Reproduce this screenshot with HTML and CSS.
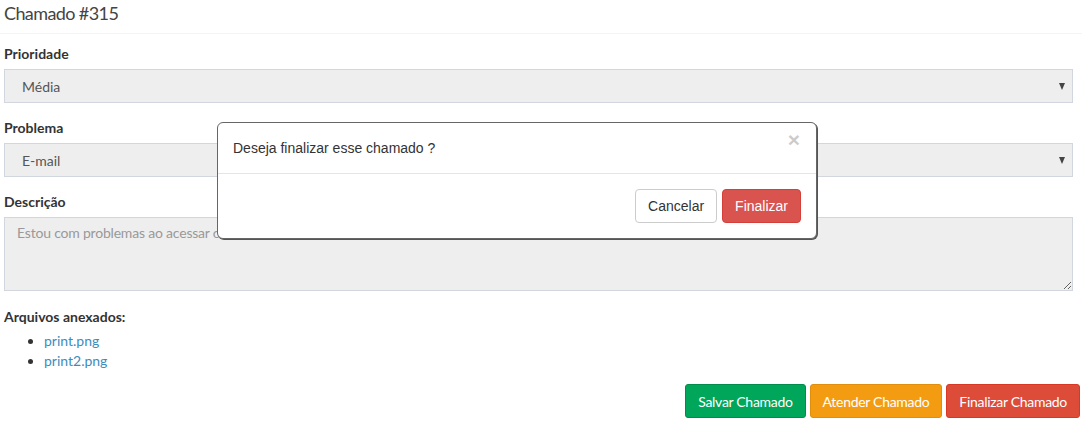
FILE: index.html
```html
<!DOCTYPE html>
<html lang="pt-BR">
<head>
<meta charset="utf-8">
<title>Chamado #315</title>
<link rel="stylesheet" href="styles.css">
</head>
<body>
<div class="page">
  <div class="box-header">Chamado #315</div>
  <div class="box-body">
    <div class="form-group">
      <label class="label">Prioridade</label>
      <div class="select-wrap"><select class="control"><option>Média</option></select></div>
    </div>
    <div class="form-group">
      <label class="label">Problema</label>
      <div class="select-wrap"><select class="control"><option>E-mail</option></select></div>
    </div>
    <div class="form-group">
      <label class="label">Descrição</label>
      <textarea class="control textarea" placeholder="Estou com problemas ao acessar o e-mail"></textarea>
    </div>
    <div class="files">
      <div class="label">Arquivos anexados:</div>
      <ul class="file-list">
        <li><a href="#">print.png</a></li>
        <li><a href="#">print2.png</a></li>
      </ul>
    </div>
  </div>
  <div class="actions">
    <button class="btn btn-success">Salvar Chamado</button>
    <button class="btn btn-warning">Atender Chamado</button>
    <button class="btn btn-danger">Finalizar Chamado</button>
  </div>

  <div class="modal">
    <div class="modal-header">
      <span class="modal-title">Deseja finalizar esse chamado ?</span>
      <span class="close">×</span>
    </div>
    <div class="modal-footer">
      <button class="mbtn mbtn-default">Cancelar</button>
      <button class="mbtn mbtn-danger">Finalizar</button>
    </div>
  </div>
</div>
</body>
</html>
```
FILE: styles.css
```css
* { box-sizing: border-box; }
html, body { margin: 0; padding: 0; background: #fff; }
body {
  font-family: Lato, "Noto Sans", "Liberation Sans", sans-serif;
  font-size: 14px;
  color: #333;
}
.page { position: relative; width: 1082px; height: 428px; overflow: hidden; }
.box-header {
  padding: 3px 4px 10px;
  font-size: 18px;
  line-height: 20px;
  letter-spacing: -0.6px;
  color: #444;
  border-bottom: 1px solid #f4f4f4;
}
.box-body { padding: 10px 9px 0 4px; }
.form-group { margin-bottom: 15px; }
.label {
  display: block;
  font-weight: 700;
  line-height: 20px;
  margin-bottom: 5px;
  color: #333;
}
.select-wrap { position: relative; }
.select-wrap::after {
  content: "";
  position: absolute;
  right: 8px;
  top: 14px;
  border-left: 3.5px solid transparent;
  border-right: 3.5px solid transparent;
  border-top: 7px solid #444;
}
.control {
  display: block;
  width: 100%;
  height: 34px;
  padding: 6px 17px;
  font-family: inherit;
  font-size: 14px;
  color: #555;
  background: #eee;
  border: 1px solid #d2d6de;
  border-radius: 0;
  -webkit-appearance: none;
  appearance: none;
  outline: none;
}
.textarea {
  height: 74px;
  padding: 6px 12px;
  letter-spacing: -0.2px;
  resize: vertical;
}
.textarea::placeholder { color: #999; }
.files { margin-top: 16px; }
.files .label { margin-bottom: 4px; }
.file-list { margin: 0; padding-left: 40px; line-height: 20px; }
.file-list a { color: #3c8dbc; text-decoration: none; }
.actions {
  display: flex;
  justify-content: flex-end;
  gap: 4px;
  padding: 13px 2px 0 0;
}
.btn {
  height: 34px;
  padding: 6px 12px;
  font-family: inherit;
  font-size: 14px;
  letter-spacing: -0.3px;
  color: #fff;
  border: 1px solid transparent;
  border-radius: 3px;
}
.btn-success { background: #00a65a; border-color: #008d4c; }
.btn-warning { background: #f39c12; border-color: #e08e0b; }
.btn-danger { background: #dd4b39; border-color: #d73925; }

.modal {
  position: absolute;
  left: 217px;
  top: 122px;
  width: 600px;
  background: #fff;
  border: 1px solid #666;
  border-radius: 6px;
  box-shadow: 1px 1px 0 #555;
  font-family: "Liberation Sans", Arial, sans-serif;
}
.modal-header {
  display: flex;
  justify-content: space-between;
  align-items: flex-start;
  padding: 15px;
  line-height: 20px;
  border-bottom: 1px solid #e5e5e5;
}
.modal-title { font-size: 14px; color: #333; }
.close {
  font-size: 21px;
  font-weight: 700;
  line-height: 1;
  color: #000;
  opacity: .2;
  margin-top: -9px;
  margin-right: 1px;
}
.modal-footer {
  display: flex;
  justify-content: flex-end;
  gap: 5px;
  padding: 15px;
}
.mbtn {
  height: 34px;
  padding: 6px 12px;
  font-family: inherit;
  font-size: 14px;
  border: 1px solid #ccc;
  border-radius: 4px;
}
.mbtn-default { background: #fff; color: #333; }
.mbtn-danger { background: #d9534f; color: #fff; border-color: #d43f3a; }
```
